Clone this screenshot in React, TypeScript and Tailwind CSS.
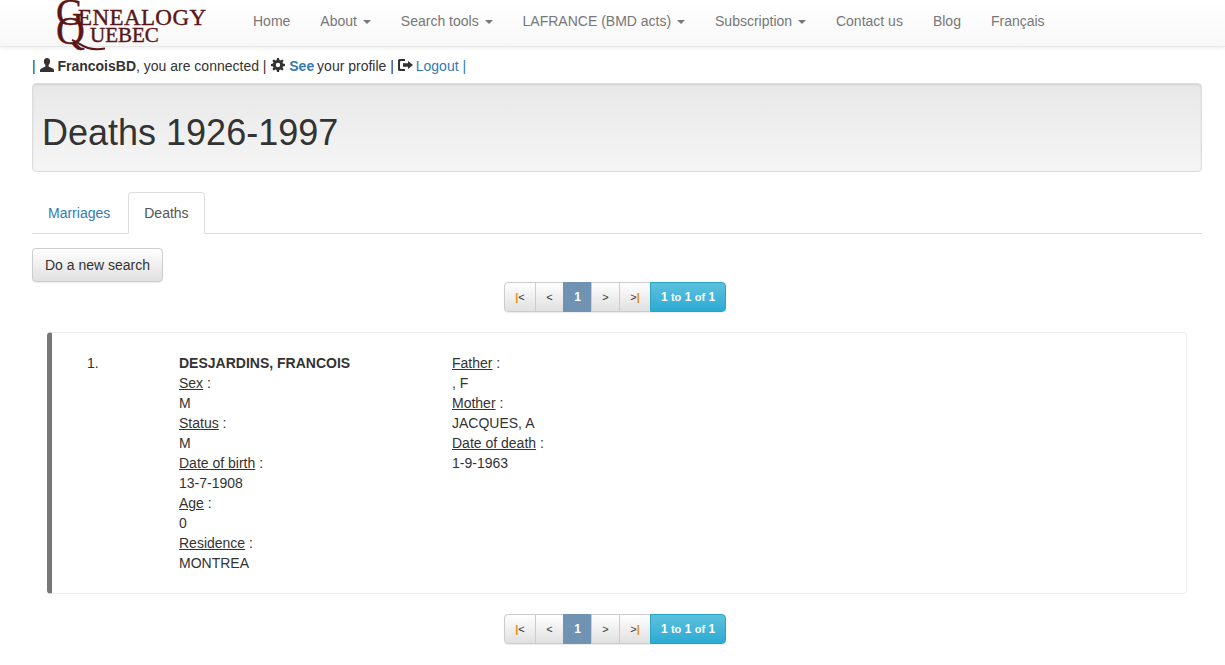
import React from "react";

const font = { fontFamily: '"Liberation Sans", Arial, sans-serif' };

function Caret() {
  return <span className="ml-[2px] inline-block w-0 h-0 align-middle border-x-[4px] border-x-transparent border-t-[4px] border-t-[#777]" />;
}

function NavItem({ label, caret }: { label: string; caret?: boolean }) {
  return (
    <a className="px-[15px] leading-[20px] py-[11px] text-[#777] whitespace-pre">
      {label}
      {caret ? " " : ""}
      {caret ? <Caret /> : null}
    </a>
  );
}

function Logo() {
  const s = { fontFamily: '"Liberation Serif", "Times New Roman", serif' };
  return (
    <div className="relative w-[165px] h-[46px] overflow-visible text-[#5a1616] [-webkit-text-stroke:0.4px_#5a1616]" style={s}>
      <span className="absolute left-0 top-[-7px] text-[38px] leading-[38px]">G</span>
      <span className="absolute left-0 top-[11px] text-[40px] leading-[40px]">Q</span>
      <svg viewBox="0 0 40 14" className="absolute left-[14px] top-[38px] w-[40px] h-[14px]" fill="none" stroke="#5a1616">
        <path d="M2 2c6 2 9 6 16 8 5 1.500 10 1.500 17 .5" strokeWidth="2" />
      </svg>
      <span className="absolute left-[22px] top-[6px] text-[23px] leading-[23px] tracking-[0.4px] whitespace-nowrap">ENEALOGY</span>
      <span className="absolute left-[34px] top-[25px] text-[21px] leading-[21px] whitespace-nowrap">UEBEC</span>
    </div>
  );
}

function UserIcon() {
  return (
    <svg viewBox="0 0 14 14" className="inline-block w-[14px] h-[14px] align-[-1px]" fill="#333">
      <path d="M7 0C5 0 3.9 1.4 3.9 3.300c0 1.500.6 3 1.500 3.800v1.400L1.200 10.400C.5 10.800 0 11.300 0 12v2h14v-2c0-.7-.5-1.200-1.200-1.600L8.600 8.500V7.100c.9-.8 1.500-2.300 1.500-3.800C10.100 1.400 9 0 7 0z" />
    </svg>
  );
}

function CogIcon() {
  return (
    <svg viewBox="0 0 14 14" className="inline-block w-[14px] h-[14px] align-[-1px] ml-px" fill="#333">
      <path fillRule="evenodd" d="M6 0h2l.4 2 1.100.5L11.300 1.400l1.300 1.300-1.100 1.800.5 1.100 2 .4v2l-2 .4-.5 1.100 1.100 1.800-1.300 1.300-1.800-1.100-1.100.5L8 14H6l-.4-2-1.100-.5-1.800 1.100-1.300-1.300 1.100-1.800L2 8.400 0 8V6l2-.4.5-1.100L1.400 2.700l1.300-1.300 1.800 1.100L5.600 2zM7 4.800a2.200 2.200 0 100 4.400 2.200 2.200 0 000-4.400z" />
    </svg>
  );
}

function LogoutIcon() {
  return (
    <svg viewBox="0 0 15 14" className="inline-block w-[15px] h-[14px] align-[-1px]" fill="#333">
      <path d="M1.500 1H7v2H3a1 1 0 00-1 1v6a1 1 0 001 1h4v2H1.500A1.500 1.500 0 010 11.500v-9A1.500 1.500 0 011.500 1z" />
      <path d="M10 3l5 4-5 4V8.800H5V5.200h5z" />
    </svg>
  );
}

function Pagination() {
  const cell = "h-[30px] flex items-center justify-center border border-[#ccc] bg-gradient-to-b from-white to-[#e0e0e0] text-[11px] text-[#333] -ml-px";
  const bar = <span className="text-[#e08e0b] font-bold">|</span>;
  return (
    <div className="flex justify-center h-[30px] text-[12px] mr-[4px]">
      <div className="flex shadow-[0_1px_1px_rgba(0,0,0,0.08)] rounded-[4px]">
        <span className={`${cell} w-[32px] !ml-0 rounded-l-[4px]`}>{bar}&lt;</span>
        <span className={`${cell} w-[29px]`}>&lt;</span>
        <span className="h-[30px] w-[29px] -ml-px flex items-center justify-center bg-[#7093b3] text-white font-bold text-[12px]">1</span>
        <span className={`${cell} w-[29px]`}>&gt;</span>
        <span className={`${cell} w-[32px]`}>&gt;{bar}</span>
        <span className="h-[30px] w-[76px] -ml-px flex items-center justify-center rounded-r-[4px] border border-[#28a4c9] bg-gradient-to-b from-[#5bc0de] to-[#2aabd2] text-white font-bold text-[12px] whitespace-pre">
          1 <span className="text-[11px]">to</span> 1 <span className="text-[11px]">of</span> 1
        </span>
      </div>
    </div>
  );
}

function Field({ label, value }: { label: string; value: string }) {
  return (
    <>
      <div><span className="underline">{label}</span> :</div>
      <div>{value}</div>
    </>
  );
}

export default function App() {
  return (
    <div className="min-h-[665px] bg-white text-[14px] leading-[20px] text-[#333]" style={font}>
      <nav className="h-[47px] bg-gradient-to-b from-white to-[#f8f8f8] border-b border-[#e7e7e7] shadow-[0_1px_5px_rgba(0,0,0,0.075)] flex pl-[56px] items-start">
        <Logo />
        <div className="flex ml-[17px]">
          <NavItem label="Home" />
          <NavItem label="About" caret />
          <NavItem label="Search tools" caret />
          <NavItem label="LAFRANCE (BMD acts)" caret />
          <NavItem label="Subscription" caret />
          <NavItem label="Contact us" />
          <NavItem label="Blog" />
          <NavItem label="Français" />
        </div>
      </nav>

      <div className="pl-[32px] pr-[23px]">
        <div className="h-[36px] pt-[9px] whitespace-pre">
          | <UserIcon /> <b>FrancoisBD</b>, you are connected | <CogIcon /> <b className="text-[#337ab7] -mr-px">See</b> your profile | <LogoutIcon /><a className="ml-[3px] text-[#337ab7]">Logout</a> <span className="text-[#337ab7]">|</span>
        </div>

        <div className="h-[89px] border border-[#ddd] rounded-[4px] bg-gradient-to-b from-[#e8e8e8] to-[#f5f5f5] shadow-[inset_0_1px_2px_rgba(0,0,0,0.1)] pl-[9px] flex items-center">
          <h1 className="text-[36px] leading-[40px] font-normal text-[#333] mt-[11px]">Deaths 1926-1997</h1>
        </div>

        <div className="mt-[20px] h-[42px] border-b border-[#ddd] flex">
          <a className="px-[16px] h-[42px] leading-[42px] text-[#337ab7]">Marriages</a>
          <a className="ml-[2px] px-[15px] h-[42px] leading-[40px] bg-white border border-[#ddd] border-b-white rounded-t-[4px] text-[#555]">Deaths</a>
        </div>

        <div className="mt-[14px] h-[34px]">
          <button className="h-[34px] px-[12px] border border-[#ccc] rounded-[4px] bg-gradient-to-b from-white to-[#e0e0e0] shadow-[0_1px_1px_rgba(0,0,0,0.08)] text-[#333] text-[14px]">Do a new search</button>
        </div>

        <Pagination />

        <div className="mt-[20px] mx-[15px] h-[262px] rounded-[4px] border border-[#eee] border-l-[5px] border-l-[#777] flex pt-[20px] pl-[35px]">
          <div className="w-[92px]">1.</div>
          <div className="w-[273px]">
            <div className="font-bold">DESJARDINS, FRANCOIS</div>
            <Field label="Sex" value="M" />
            <Field label="Status" value="M" />
            <Field label="Date of birth" value="13-7-1908" />
            <Field label="Age" value="0" />
            <Field label="Residence" value="MONTREA" />
          </div>
          <div>
            <Field label="Father" value=", F" />
            <Field label="Mother" value="JACQUES, A" />
            <Field label="Date of death" value="1-9-1963" />
          </div>
        </div>

        <div className="mt-[20px]">
          <Pagination />
        </div>
      </div>
    </div>
  );
}
